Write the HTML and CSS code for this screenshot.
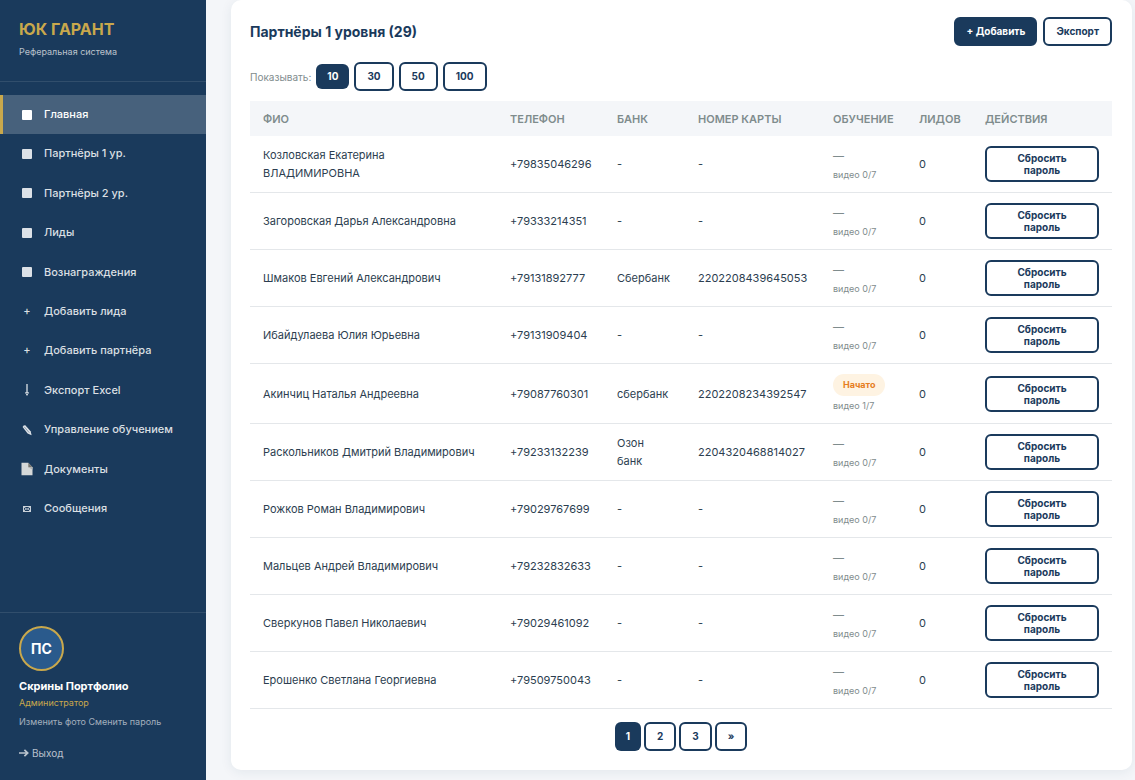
FILE: index.html
```html
<!DOCTYPE html>
<html lang="ru">

<head>
    <meta charset="UTF-8">
    <meta name="viewport" content="width=device-width, initial-scale=1">
    <title>ЮК ГАРАНТ</title>
    <link rel="stylesheet" href="styles.css">
</head>

<body>
    <aside class="sidebar">
        <div class="sidebar-header">
            <div class="logo">ЮК ГАРАНТ</div>
            <div class="logo-sub">Реферальная система</div>
        </div>

        <nav class="nav">
            <a href="#" class="nav-item active"><span class="nav-icon"><span class="square"></span></span>Главная</a>
            <a href="#" class="nav-item"><span class="nav-icon"><span class="square"></span></span>Партнёры 1 ур.</a>
            <a href="#" class="nav-item"><span class="nav-icon"><span class="square"></span></span>Партнёры 2 ур.</a>
            <a href="#" class="nav-item"><span class="nav-icon"><span class="square"></span></span>Лиды</a>
            <a href="#" class="nav-item"><span class="nav-icon"><span class="square"></span></span>Вознаграждения</a>
            <a href="#" class="nav-item"><span class="nav-icon">+</span>Добавить лида</a>
            <a href="#" class="nav-item"><span class="nav-icon">+</span>Добавить партнёра</a>
            <a href="#" class="nav-item"><span class="nav-icon">
                <svg width="12" height="14" viewBox="0 0 12 14" fill="none" stroke="currentColor"><path d="M6 1v8.5" stroke-width="1.3"/><path d="M4.5 9.6L6 12.4l1.5-2.8z" stroke-width=".9"/></svg>
            </span>Экспорт Excel</a>
            <a href="#" class="nav-item"><span class="nav-icon">
                <svg width="12" height="12" viewBox="0 0 12 12"><path d="M1.6 3Q2 .9 4.3 1.2L9.6 7.2 10.6 11.2 6.6 9.6z" fill="currentColor"/><path d="M3.2 2.8l5 5.8" stroke="#1a3a5c" stroke-width=".4"/></svg>
            </span>Управление обучением</a>
            <a href="#" class="nav-item"><span class="nav-icon">
                <svg width="12" height="14" viewBox="0 0 12 14"><path d="M.5.7h6.8l4.2 4.5v8.1H.5z" fill="#d5d8d8"/><path d="M7.3.7v4.5h4.2z" fill="#77766f"/><path d="M7.3 5.2h4.2v2.6z" fill="#aeb1b1"/></svg>
            </span>Документы</a>
            <a href="#" class="nav-item"><span class="nav-icon">
                <svg width="8" height="6" viewBox="0 0 8 6" fill="none" stroke="currentColor" stroke-width=".9"><path d="M.5.5h7v5h-7zM.5.5L4 3.5 7.5.5M.5 5.5L3 2.7M7.5 5.5L5 2.7"/></svg>
            </span>Сообщения</a>
        </nav>

        <div class="sidebar-footer">
            <div class="avatar">ПС</div>
            <div class="user-name">Скрины Портфолио</div>
            <div class="user-role">Администратор</div>
            <div class="user-links"><a href="#">Изменить фото</a> <a href="#">Сменить пароль</a></div>
            <a href="#" class="logout">
                <svg width="10" height="8" viewBox="0 0 10 8" fill="none" stroke="currentColor" stroke-width="1.7"><path d="M0 4h8.4M5.4.8L8.7 4 5.4 7.2"/></svg>
                Выход</a>
        </div>
    </aside>

    <main class="main">
        <section class="card">
            <div class="card-header">
                <h2 class="card-title">Партнёры 1 уровня (29)</h2>
                <div class="card-actions">
                    <button class="btn btn-primary">+ Добавить</button>
                    <button class="btn">Экспорт</button>
                </div>
            </div>

            <div class="per-page">
                <span class="per-page-label">Показывать:</span>
                <button class="btn btn-flat">10</button>
                <button class="btn">30</button>
                <button class="btn">50</button>
                <button class="btn">100</button>
            </div>

            <table class="table">
                <thead>
                    <tr>
                        <th>ФИО</th>
                        <th class="col-phone">Телефон</th>
                        <th class="col-bank">Банк</th>
                        <th class="col-number">Номер карты</th>
                        <th class="col-study">Обучение</th>
                        <th class="col-leads">Лидов</th>
                        <th class="col-actions">Действия</th>
                    </tr>
                </thead>
                <tbody>
                    <tr>
                        <td>Козловская Екатерина<br>ВЛАДИМИРОВНА</td>
                        <td>+79835046296</td>
                        <td>-</td>
                        <td>-</td>
                        <td><div class="dash">—</div><div class="video">видео 0/7</div></td>
                        <td>0</td>
                        <td><button class="btn btn-reset">Сбросить пароль</button></td>
                    </tr>
                    <tr>
                        <td>Загоровская Дарья Александровна</td>
                        <td>+79333214351</td>
                        <td>-</td>
                        <td>-</td>
                        <td><div class="dash">—</div><div class="video">видео 0/7</div></td>
                        <td>0</td>
                        <td><button class="btn btn-reset">Сбросить пароль</button></td>
                    </tr>
                    <tr>
                        <td>Шмаков Евгений Александрович</td>
                        <td>+79131892777</td>
                        <td>Сбербанк</td>
                        <td>2202208439645053</td>
                        <td><div class="dash">—</div><div class="video">видео 0/7</div></td>
                        <td>0</td>
                        <td><button class="btn btn-reset">Сбросить пароль</button></td>
                    </tr>
                    <tr>
                        <td>Ибайдулаева Юлия Юрьевна</td>
                        <td>+79131909404</td>
                        <td>-</td>
                        <td>-</td>
                        <td><div class="dash">—</div><div class="video">видео 0/7</div></td>
                        <td>0</td>
                        <td><button class="btn btn-reset">Сбросить пароль</button></td>
                    </tr>
                    <tr>
                        <td>Акинчиц Наталья Андреевна</td>
                        <td>+79087760301</td>
                        <td>сбербанк</td>
                        <td>2202208234392547</td>
                        <td><div class="badge">Начато</div><div class="video">видео 1/7</div></td>
                        <td>0</td>
                        <td><button class="btn btn-reset">Сбросить пароль</button></td>
                    </tr>
                    <tr>
                        <td>Раскольников Дмитрий Владимирович</td>
                        <td>+79233132239</td>
                        <td>Озон<br>банк</td>
                        <td>2204320468814027</td>
                        <td><div class="dash">—</div><div class="video">видео 0/7</div></td>
                        <td>0</td>
                        <td><button class="btn btn-reset">Сбросить пароль</button></td>
                    </tr>
                    <tr>
                        <td>Рожков Роман Владимирович</td>
                        <td>+79029767699</td>
                        <td>-</td>
                        <td>-</td>
                        <td><div class="dash">—</div><div class="video">видео 0/7</div></td>
                        <td>0</td>
                        <td><button class="btn btn-reset">Сбросить пароль</button></td>
                    </tr>
                    <tr>
                        <td>Мальцев Андрей Владимирович</td>
                        <td>+79232832633</td>
                        <td>-</td>
                        <td>-</td>
                        <td><div class="dash">—</div><div class="video">видео 0/7</div></td>
                        <td>0</td>
                        <td><button class="btn btn-reset">Сбросить пароль</button></td>
                    </tr>
                    <tr>
                        <td>Сверкунов Павел Николаевич</td>
                        <td>+79029461092</td>
                        <td>-</td>
                        <td>-</td>
                        <td><div class="dash">—</div><div class="video">видео 0/7</div></td>
                        <td>0</td>
                        <td><button class="btn btn-reset">Сбросить пароль</button></td>
                    </tr>
                    <tr>
                        <td>Ерошенко Светлана Георгиевна</td>
                        <td>+79509750043</td>
                        <td>-</td>
                        <td>-</td>
                        <td><div class="dash">—</div><div class="video">видео 0/7</div></td>
                        <td>0</td>
                        <td><button class="btn btn-reset">Сбросить пароль</button></td>
                    </tr>
                </tbody>
            </table>

            <div class="pagination">
                <button class="btn btn-flat">1</button>
                <button class="btn">2</button>
                <button class="btn">3</button>
                <button class="btn">»</button>
            </div>
        </section>
    </main>
</body>

</html>
```

FILE: styles.css
```css
:root {
    --navy: #1a3a5c;
    --gold: #c9a84c;
    --bg: #f4f6f9;
    --text: #2c3e50;
    --muted: #7f8c8d;
    --border: #e4e7ea;
}

* {
    box-sizing: border-box;
}

body {
    margin: 0;
    display: flex;
    min-height: 100vh;
    font-family: Inter, "Liberation Sans", sans-serif;
    font-size: 11px;
    line-height: 18px;
    color: var(--text);
    background: var(--bg);
}

a {
    color: inherit;
    text-decoration: none;
}

/* Sidebar */
.sidebar {
    display: flex;
    flex-direction: column;
    flex: none;
    width: 206px;
    height: 100vh;
    position: sticky;
    top: 0;
    background: var(--navy);
    color: #fff;
}

.sidebar-header {
    padding: 18px 19px 21px;
    border-bottom: 1px solid rgba(255, 255, 255, 0.1);
}

.logo {
    color: var(--gold);
    font-size: 16px;
    font-weight: 700;
    line-height: 22px;
}

.logo-sub {
    margin-top: 4px;
    font-size: 9px;
    line-height: 16px;
    color: rgba(255, 255, 255, 0.7);
}

.nav {
    flex: 1;
    padding: 13px 0;
}

.nav-item {
    display: flex;
    align-items: center;
    gap: 9px;
    padding: 12px 16px;
    border-left: 3px solid transparent;
    font-weight: 500;
    line-height: 1.4;
    color: rgba(255, 255, 255, 0.85);
}

.nav-item.active {
    color: #fff;
    background: rgba(255, 255, 255, 0.2);
    border-left-color: var(--gold);
}

.nav-icon {
    display: flex;
    align-items: center;
    justify-content: center;
    width: 16px;
}

.square {
    width: 10px;
    height: 10px;
    border-radius: 1px;
    background: currentColor;
}

.sidebar-footer {
    padding: 13px 19px 18px;
    border-top: 1px solid rgba(255, 255, 255, 0.1);
}

.avatar {
    display: flex;
    align-items: center;
    justify-content: center;
    width: 45px;
    height: 45px;
    margin-bottom: 6px;
    border: 2px solid var(--gold);
    border-radius: 50%;
    background: #2a5a8c;
    font-size: 14px;
    font-weight: 700;
}

.user-name {
    font-weight: 700;
}

.user-role {
    font-size: 9px;
    line-height: 15px;
    color: var(--gold);
}

.user-links {
    margin-top: 5px;
    font-size: 9px;
    line-height: 14px;
    color: rgba(255, 255, 255, 0.6);
}

.logout {
    display: flex;
    align-items: center;
    gap: 3px;
    margin-top: 15px;
    font-size: 10px;
    color: rgba(255, 255, 255, 0.7);
}

/* Content */
.main {
    flex: 1;
    min-width: 0;
    padding: 0 3px 10px 25px;
}

.card {
    padding: 17px 20px 19px 19px;
    border-radius: 10px;
    background: #fff;
    box-shadow: 0 2px 12px rgba(26, 58, 92, 0.08);
}

.card-header {
    display: flex;
    align-items: center;
    justify-content: space-between;
    margin-bottom: 16px;
}

.card-title {
    margin: 0;
    font-size: 14px;
    font-weight: 700;
    color: var(--navy);
}

.card-actions {
    display: flex;
    gap: 6px;
}

.btn {
    padding: 5px 11px;
    border: 2px solid var(--navy);
    border-radius: 6px;
    background: #fff;
    color: var(--navy);
    font-family: inherit;
    font-size: 10px;
    font-weight: 700;
    line-height: 15px;
    cursor: pointer;
}

.btn-primary {
    background: var(--navy);
    color: #fff;
    padding: 5px 10px;
}

.btn-flat {
    border: none;
    background: var(--navy);
    color: #fff;
}

.per-page {
    display: flex;
    align-items: center;
    gap: 5px;
    margin-bottom: 10px;
}

.per-page-label {
    font-size: 10px;
    color: var(--muted);
}

.table {
    width: 100%;
    table-layout: fixed;
    border-collapse: collapse;
}

.table th {
    height: 35px;
    padding: 0 13px;
    background: var(--bg);
    color: var(--muted);
    font-size: 11px;
    font-weight: 600;
    text-align: left;
    text-transform: uppercase;
    white-space: nowrap;
}

.table td {
    padding: 10px 13px;
    border-bottom: 1px solid var(--border);
    vertical-align: middle;
}

.col-phone {
    width: 107px;
}

.col-bank {
    width: 81px;
}

.col-number {
    width: 135px;
}

.col-study {
    width: 86px;
}

.col-leads {
    width: 66px;
}

.col-actions {
    width: 140px;
}

.dash {
    font-weight: 500;
    color: var(--muted);
}

.video {
    margin-top: 3px;
    font-size: 9px;
    line-height: 14px;
    color: var(--muted);
}

.badge {
    width: fit-content;
    padding: 3px 10px;
    border-radius: 11px;
    background: #fef3e2;
    color: #e67e22;
    font-size: 9px;
    font-weight: 700;
    line-height: 16px;
}

.btn-reset {
    display: block;
    width: 100%;
    padding: 4px 26px;
    line-height: 12px;
}

.pagination {
    display: flex;
    justify-content: center;
    gap: 3px;
    margin-top: 13px;
}
```
